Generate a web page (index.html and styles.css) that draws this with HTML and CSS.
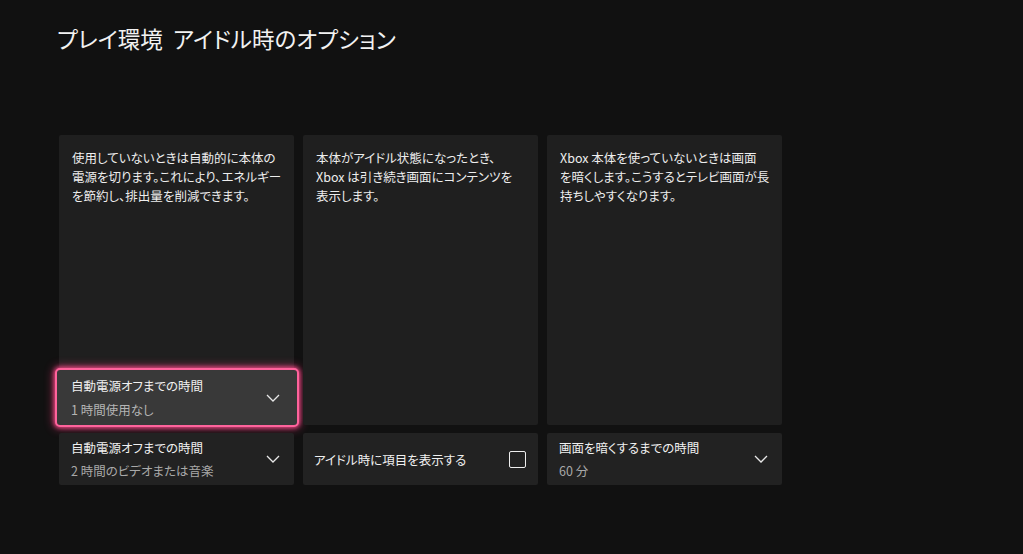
FILE: index.html
```html
<!DOCTYPE html>
<html lang="ja">
<head>
<meta charset="utf-8">
<title>アイドル時のオプション</title>
<link rel="stylesheet" href="styles.css">
</head>
<body>
<h1 class="title">プレイ環境&nbsp; アイドル時のオプション</h1>
<main class="grid">
  <section class="panel">
    <p class="desc">使用していないときは自動的に本体の<br>電源を切ります。これにより、エネルギー<br>を節約し、排出量を削減できます。</p>
    <div class="dropdown focused">
      <div class="dd-text">
        <span class="dd-label">自動電源オフまでの時間</span>
        <span class="dd-value">1 時間使用なし</span>
      </div>
      <svg class="chev" viewBox="0 0 14 8" width="14" height="8"><polyline points="1,1 7,7 13,1" fill="none" stroke="#e8e8e8" stroke-width="1.3"/></svg>
    </div>
  </section>
  <section class="panel">
    <p class="desc">本体がアイドル状態になったとき、<br>Xbox は引き続き画面にコンテンツを<br>表示します。</p>
  </section>
  <section class="panel">
    <p class="desc">Xbox 本体を使っていないときは画面<br>を暗くします。こうするとテレビ画面が長<br>持ちしやすくなります。</p>
  </section>

  <div class="dropdown tile">
    <div class="dd-text">
      <span class="dd-label">自動電源オフまでの時間</span>
      <span class="dd-value">2 時間のビデオまたは音楽</span>
    </div>
    <svg class="chev" viewBox="0 0 14 8" width="14" height="8"><polyline points="1,1 7,7 13,1" fill="none" stroke="#e8e8e8" stroke-width="1.3"/></svg>
  </div>
  <div class="check tile">
    <span class="check-label">アイドル時に項目を表示する</span>
    <span class="box"></span>
  </div>
  <div class="dropdown tile">
    <div class="dd-text">
      <span class="dd-label">画面を暗くするまでの時間</span>
      <span class="dd-value">60 分</span>
    </div>
    <svg class="chev" viewBox="0 0 14 8" width="14" height="8"><polyline points="1,1 7,7 13,1" fill="none" stroke="#e8e8e8" stroke-width="1.3"/></svg>
  </div>
</main>
</body>
</html>
```
FILE: styles.css
```css
html, body {
  margin: 0;
  padding: 0;
  background: #111111;
  color: #f0f0f0;
  font-family: "Noto Sans CJK JP", "Noto Sans", sans-serif;
  font-feature-settings: "palt";
  height: 100%;
  overflow: hidden;
}

.title {
  margin: 0;
  padding: 23px 0 0 57px;
  font-size: 22.5px;
  font-weight: 400;
  line-height: 30px;
  color: #f2f2f2;
  letter-spacing: 0.1px;
}

.grid {
  display: grid;
  grid-template-columns: repeat(3, 235px);
  grid-template-rows: 290px 52px;
  column-gap: 9px;
  row-gap: 8px;
  margin: 82px 0 0 59px;
}

.panel {
  background: #1f1f1f;
  border-radius: 2px;
  display: flex;
  flex-direction: column;
}

.desc {
  flex: 1;
  margin: 0;
  padding: 13px 10px 0 13px;
  font-size: 12.5px;
  line-height: 19px;
  color: #ededed;
  white-space: nowrap;
}

.tile {
  background: #222222;
  border-radius: 2px;
}

.dropdown {
  display: flex;
  align-items: center;
  justify-content: space-between;
  padding: 0 14px 0 12px;
}

.dd-text {
  display: flex;
  flex-direction: column;
}

.dd-label {
  font-size: 12.5px;
  line-height: 23px;
  color: #f0f0f0;
}

.dd-value {
  font-size: 12.5px;
  line-height: 23px;
  color: #a9a9a9;
}

.chev {
  display: block;
}

.focused {
  height: 59px;
  box-sizing: border-box;
  margin: 0 -5px -2px -4px;
  padding: 0 17px 0 14px;
  background: #393939;
  border: 2.5px solid #ff639c;
  border-radius: 5px;
  box-shadow: 0 0 4px 1px rgba(255, 80, 145, 0.85), 0 0 10px 2px rgba(255, 60, 130, 0.45);
}

.focused .dd-label {
  line-height: 24px;
}

.focused .dd-value {
  color: #b4b4b4;
  line-height: 24px;
}

.check {
  display: flex;
  align-items: center;
  justify-content: space-between;
  padding: 0 12px 0 11px;
}

.check-label {
  font-size: 12.5px;
  color: #f0f0f0;
}

.box {
  width: 17px;
  height: 17px;
  box-sizing: border-box;
  border: 1.6px solid #eeeeee;
  border-radius: 2px;
}
```
